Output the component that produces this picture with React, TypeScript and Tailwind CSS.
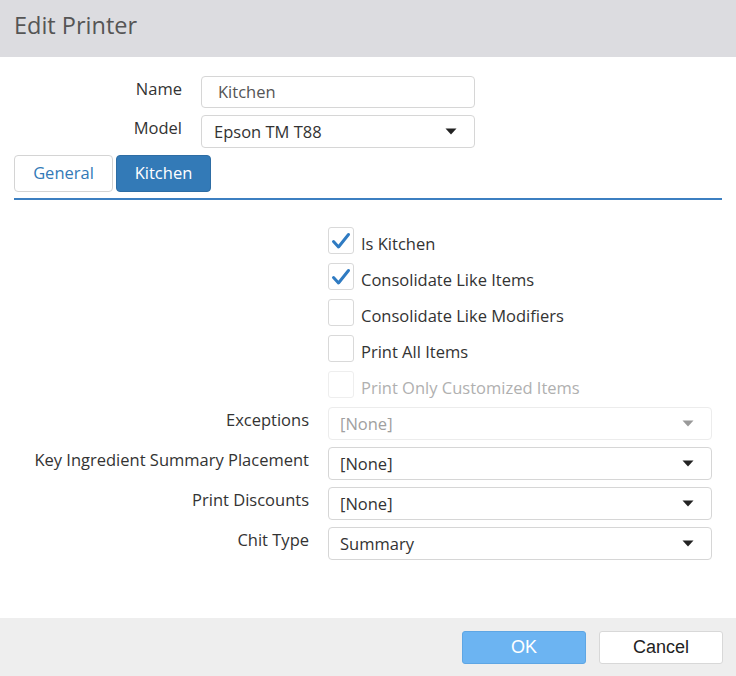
const font = { fontFamily: '"Open Sans", "Noto Sans", sans-serif' }

function Caret({ muted }: { muted?: boolean }) {
  return (
    <svg width="12" height="7" viewBox="0 0 12 7" className="shrink-0">
      <path d="M0.5 0.5 H11.5 L6 6.5 Z" fill={muted ? '#999999' : '#222222'} />
    </svg>
  )
}

function Check({ checked, disabled }: { checked?: boolean; disabled?: boolean }) {
  return (
    <div
      className={`w-[26px] h-[27px] rounded-[3px] border flex items-center justify-center bg-white ${
        disabled ? 'border-[#eeeeee]' : 'border-[#d9d9d9]'
      }`}
    >
      {checked && (
        <svg width="20" height="18" viewBox="0 0 20 18">
          <path
            d="M2.5 9.5 L7.5 15 L17.5 2.5"
            fill="none"
            stroke="#2f7bc2"
            strokeWidth="3"
            strokeLinecap="round"
            strokeLinejoin="round"
          />
        </svg>
      )}
    </div>
  )
}

function Select({ value, disabled }: { value: string; disabled?: boolean }) {
  return (
    <div
      className={`h-[33px] w-[384px] rounded-[4px] border flex items-center justify-between pl-[11px] pr-[17px] ${
        disabled ? 'border-[#ececec] text-[#a0a0a0]' : 'border-[#d6d6d6] text-[#333333]'
      }`}
    >
      <span className="text-[16.5px] pt-[2px]">{value}</span>
      <Caret muted={disabled} />
    </div>
  )
}

export default function App() {
  const checks = [
    { label: 'Is Kitchen', checked: true },
    { label: 'Consolidate Like Items', checked: true },
    { label: 'Consolidate Like Modifiers' },
    { label: 'Print All Items' },
    { label: 'Print Only Customized Items', disabled: true },
  ]
  const selects = [
    { label: 'Exceptions', value: '[None]', disabled: true },
    { label: 'Key Ingredient Summary Placement', value: '[None]' },
    { label: 'Print Discounts', value: '[None]' },
    { label: 'Chit Type', value: 'Summary' },
  ]

  return (
    <div className="w-[736px] h-[676px] flex flex-col bg-white text-[#333333]" style={font}>
      {/* header */}
      <div className="h-[57px] bg-[#dcdce0] flex items-center px-[14px]">
        <h1 className="text-[23.5px] text-[#555555] pb-[6px]">Edit Printer</h1>
      </div>

      {/* body */}
      <div className="flex-1 flex flex-col px-[14px] pt-[19px]">
        <div className="grid grid-cols-[168px_274px] gap-x-[19px] gap-y-[7px] items-start">
          <label className="text-right text-[16.5px] leading-[26px]">Name</label>
          <div className="h-[32px] rounded-[4px] border border-[#d6d6d6] flex items-center pl-[16px] text-[16.5px] text-[#555555]">
            Kitchen
          </div>
          <label className="text-right text-[16.5px] leading-[26px]">Model</label>
          <div className="h-[33px] rounded-[4px] border border-[#d6d6d6] flex items-center justify-between pl-[12px] pr-[17px] text-[16.5px]">
            <span className="pt-[2px]">Epson TM T88</span>
            <Caret />
          </div>
        </div>

        {/* tabs */}
        <div className="flex gap-[3px] mt-[7px]">
          <div className="w-[99px] h-[37px] rounded-[4px] border border-[#d4d4d4] flex items-center justify-center text-[16.5px] text-[#337ab7]">
            General
          </div>
          <div className="w-[95px] h-[37px] rounded-[4px] bg-[#337ab7] border border-[#2e6da4] flex items-center justify-center text-[16.5px] text-white">
            Kitchen
          </div>
        </div>
        <div className="h-[2px] bg-[#3c7fc1] mt-[6px]" />

        {/* checkboxes */}
        <div className="flex flex-col gap-[9px] mt-[27px] pl-[314px]">
          {checks.map((c) => (
            <div key={c.label} className="flex items-center gap-[7px] h-[27px]">
              <Check checked={c.checked} disabled={c.disabled} />
              <span
                className={`text-[16.5px] leading-[21px] pt-[5px] ${
                  c.disabled ? 'text-[#b0b0b0]' : 'text-[#333333]'
                }`}
              >
                {c.label}
              </span>
            </div>
          ))}
        </div>

        {/* selects */}
        <div className="flex flex-col gap-[7px] mt-[9px]">
          {selects.map((s) => (
            <div key={s.label} className="flex items-start gap-[19px]">
              <label className="w-[295px] text-right text-[16.5px] leading-[26px]">{s.label}</label>
              <Select value={s.value} disabled={s.disabled} />
            </div>
          ))}
        </div>
      </div>

      {/* footer */}
      <div className="h-[58px] bg-[#eeeeee] flex items-center justify-end gap-[13px] pr-[13px]">
        <button
          className="w-[124px] h-[33px] rounded-[3px] bg-[#6cb4f2] border border-[#5ea6e4] text-white text-[18px]"
          style={{ fontFamily: '"Liberation Sans", Arial, sans-serif' }}
        >
          OK
        </button>
        <button
          className="w-[124px] h-[33px] rounded-[3px] bg-white border border-[#d8d8d8] text-[#222222] text-[18px]"
          style={{ fontFamily: '"Liberation Sans", Arial, sans-serif' }}
        >
          Cancel
        </button>
      </div>
    </div>
  )
}
